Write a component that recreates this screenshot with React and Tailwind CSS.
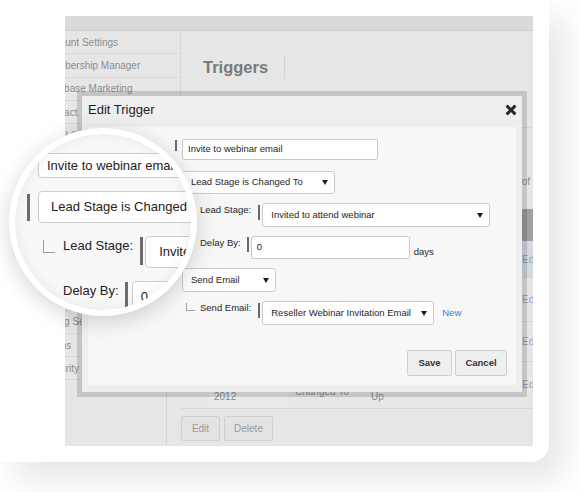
import React from "react";

const sideItems = [
  "Account Settings",
  "Membership Manager",
  "Database Marketing",
  "Contact",
  "Email Settings",
  "Lead Scoring",
  "Lead Stages",
  "Triggers",
  "Templates",
  "Domains",
  "Users",
  "API Access",
  "Billing Settings",
  "Forms",
  "Security",
];

function Arrow() {
  return (
    <svg width="6" height="5" viewBox="0 0 6 5" className="shrink-0">
      <path d="M0 0h6L3 5z" fill="#1f1f1f" />
    </svg>
  );
}

function Select({ className, children }) {
  return (
    <div
      className={`flex items-center justify-between bg-white border border-[#cbcbcb] rounded-[3px] pl-[8px] pr-[6px] whitespace-nowrap overflow-hidden ${className}`}
    >
      <span>{children}</span>
      <Arrow />
    </div>
  );
}

function Sidebar() {
  return (
    <div className="w-[102px] shrink-0 border-r border-[#d5d5d5]">
      {/* menu is wider than its column */}
      <div className="relative z-10 w-[116px] bg-[#e6e6e6] border-r border-[#d5d5d5] overflow-hidden">
        {sideItems.map((item) => (
          <div
            key={item}
            className="-ml-[22px] h-[23.3px] flex items-center border-b border-[#d8d8d8] text-[10px] text-[#8c8c8c] whitespace-nowrap"
          >
            {item}
          </div>
        ))}
      </div>
    </div>
  );
}

function Main() {
  return (
    <div className="flex-1 min-w-0 overflow-hidden pl-[14px]">
      {/* page header */}
      <div className="h-[97px] border-b border-[#d7d7d7]">
        <div className="h-[72px] flex items-center pl-[22px]">
          <span className="text-[16.5px] font-bold text-[#7a7a7a]">Triggers</span>
          <span className="ml-[16px] w-px h-[24px] bg-[#d2d2d2]" />
        </div>
      </div>
      {/* pager */}
      <div className="h-[81px] pl-[318px] pt-[46px] text-[10px] text-[#8c8c8c] whitespace-nowrap">
        1 - 4 of 4
      </div>
      {/* table */}
      <div className="w-[400px] text-[10px] text-[#8c8c8c]">
        <div className="h-[32px] bg-[#a0a0a0]" />
        <div className="h-[37px] bg-[#d5dae2] flex items-center border-b border-[#d6d6d6]">
          <span className="ml-[341px] text-[#87a3d2]">Edit</span>
        </div>
        <div className="h-[44px] flex items-center border-b border-[#d6d6d6]">
          <span className="ml-[341px] text-[#87a3d2]">Edit</span>
        </div>
        <div className="h-[40px] flex items-center border-b border-[#d6d6d6]">
          <span className="ml-[341px] text-[#87a3d2]">Edit</span>
        </div>
        <div className="h-[47px] flex border-b border-[#d6d6d6] leading-[12px]">
          <div className="w-[27px]" />
          <div className="w-[80px] bg-[#ebebeb] pl-[6px] pt-[17px]">
            <div>Oct 15,</div>
            <div>2012</div>
          </div>
          <div className="w-[77px] pl-[7px] pt-[12px]">
            <div>Lead Stage is</div>
            <div>Changed To</div>
          </div>
          <div className="w-[75px] pl-[6px] pt-[17px] whitespace-nowrap">
            <div>Webinar Follow</div>
            <div>Up</div>
          </div>
          <div className="w-[82px]" />
          <div className="pt-[17px] text-[#87a3d2]">Edit</div>
        </div>
      </div>
      {/* actions */}
      <div className="flex gap-[4px] mt-[7px]">
        <div className="w-[39px] h-[25px] flex items-center justify-center bg-[#e3e3e3] border border-[#cfcfcf] rounded-[2px] text-[10px] text-[#9a9a9a]">
          Edit
        </div>
        <div className="w-[49px] h-[25px] flex items-center justify-center bg-[#e3e3e3] border border-[#cfcfcf] rounded-[2px] text-[10px] text-[#9a9a9a]">
          Delete
        </div>
      </div>
    </div>
  );
}

function Modal() {
  return (
    <div className="absolute z-20 left-[12px] top-[75px] w-[450px] h-[306px] border-[5px] border-[rgba(0,0,0,0.14)] bg-clip-padding bg-[#eeeeee] flex flex-col">
      {/* title */}
      <div className="h-[31px] shrink-0 flex items-center justify-between pl-[6px] pr-[5px] pb-[4px]">
        <span className="text-[13px] text-[#1c1c1c]">Edit Trigger</span>
        <svg width="12" height="12" viewBox="0 0 12 12">
          <path d="M1.6 1.6l8.8 8.8M10.4 1.6l-8.8 8.8" stroke="#262626" strokeWidth="3" />
        </svg>
      </div>
      {/* body */}
      <div className="mx-[6px] h-[258px] bg-[#f7f7f7] pl-[87px] pt-[12px] text-[9.5px] text-[#262626]">
        <div className="h-[32px] flex items-start">
          <span className="mt-[1px] w-[2px] h-[11px] bg-[#6a6a6a]" />
          <div className="ml-[5px] w-[196px] h-[21px] flex items-center bg-white border border-[#cbcbcb] rounded-[2px] pl-[5px]">
            Invite to webinar email
          </div>
        </div>
        <div className="h-[32px] flex items-start">
          <span className="mt-[1px] w-[2px] h-[11px] bg-[#6a6a6a]" />
          <Select className="ml-[5px] w-[153px] h-[23px]">Lead Stage is Changed To</Select>
        </div>
        <div className="h-[33px] flex items-start pl-[11px]">
          <span className="mt-[2px] w-[9px] h-[8px] border-l border-b border-[#a0a0a0]" />
          <span className="ml-[5px]">Lead Stage:</span>
          <span className="ml-[7px] mt-[2px] w-[2px] h-[15px] bg-[#6a6a6a]" />
          <Select className="ml-[2px] w-[228px] h-[24px]">Invited to attend webinar</Select>
        </div>
        <div className="h-[32px] flex items-start pl-[25px]">
          <span>Delay By:</span>
          <span className="ml-[6px] mt-[1px] w-[2px] h-[15px] bg-[#6a6a6a]" />
          <div className="ml-[2px] w-[159px] h-[23px] flex items-center bg-white border border-[#cbcbcb] rounded-[2px] pl-[5px]">
            0
          </div>
          <span className="ml-[4px] self-center">days</span>
        </div>
        <div className="h-[33px] flex items-start pl-[7px]">
          <Select className="w-[94px] h-[24px]">Send Email</Select>
        </div>
        <div className="h-[24px] flex items-start pl-[11px]">
          <span className="mt-[2px] w-[9px] h-[8px] border-l border-b border-[#a0a0a0]" />
          <span className="ml-[5px]">Send Email:</span>
          <span className="ml-[7px] mt-[2px] w-[2px] h-[15px] bg-[#6a6a6a]" />
          <Select className="ml-[2px] w-[172px] h-[24px]">Reseller Webinar Invitation Email</Select>
          <span className="ml-[8px] self-center text-[#3f7ad4]">New</span>
        </div>
        <div className="mt-[25px] flex justify-end pr-[9px] gap-[3px]">
          <div className="w-[45px] h-[26px] flex items-center justify-center bg-[#efefef] border border-[#cfcfcf] rounded-[2px] font-bold text-[#333]">
            Save
          </div>
          <div className="w-[52px] h-[26px] flex items-center justify-center bg-[#efefef] border border-[#cfcfcf] rounded-[2px] font-bold text-[#333]">
            Cancel
          </div>
        </div>
      </div>
    </div>
  );
}

function Magnifier() {
  return (
    <div className="absolute z-30 left-[9px] top-[128px] w-[188px] h-[188px] rounded-full border-[6px] border-white bg-[#f8f8f8] overflow-hidden shadow-[0_5px_22px_rgba(0,0,0,0.17)]">
      <div className="pt-[19px] text-[13px] text-[#222] whitespace-nowrap">
        <div className="ml-[23px] w-[260px] h-[25px] flex items-center bg-white border border-[#cdcdcd] rounded-[4px] pl-[8px]">
          Invite to webinar email
        </div>
        <div className="mt-[13px] ml-[12px] flex items-start">
          <span className="mt-[3px] w-[3px] h-[27px] shrink-0 bg-[#6d6d6d]" />
          <div className="ml-[8px] w-[260px] h-[32px] shrink-0 flex items-center bg-white border border-[#cdcdcd] rounded-[4px] pl-[12px]">
            Lead Stage is Changed To
          </div>
        </div>
        <div className="mt-[13px] ml-[28px] flex items-start">
          <span className="mt-[4px] w-[12px] h-[13px] shrink-0 border-l border-b border-[#9a9a9a]" />
          <span className="ml-[8px] shrink-0">Lead Stage:</span>
          <span className="ml-[7px] mt-[1px] w-[3px] h-[28px] shrink-0 bg-[#6d6d6d]" />
          <div className="ml-[2px] w-[200px] h-[32px] shrink-0 flex items-center bg-white border border-[#cdcdcd] rounded-[4px] pl-[13px]">
            Invite
          </div>
        </div>
        <div className="mt-[13px] ml-[48px] flex items-start">
          <span className="shrink-0">Delay By:</span>
          <span className="ml-[6px] mt-[1px] w-[3px] h-[28px] shrink-0 bg-[#6d6d6d]" />
          <div className="ml-[4px] w-[200px] h-[32px] shrink-0 flex items-center bg-white border border-[#cdcdcd] rounded-[4px] pl-[8px]">
            0
          </div>
        </div>
      </div>
      <div className="pointer-events-none absolute inset-0 rounded-full shadow-[inset_0_0_14px_rgba(0,0,0,0.07)]" />
    </div>
  );
}

export default function App() {
  return (
    <div className="relative w-[579px] h-[492px] overflow-hidden bg-white font-['Liberation_Sans',Arial,sans-serif]">
      <div className="w-[549px] h-[462px] rounded-br-[18px] bg-white shadow-[16px_18px_34px_rgba(0,0,0,0.10)] pt-[16px] pl-[65px]">
        <div className="relative isolate w-[468px] h-[430px] overflow-hidden bg-[#e6e6e6]">
          <div className="h-[15px] bg-[#dadada] border-b border-[#d0d0d0]" />
          <div className="flex h-[415px]">
            <Sidebar />
            <Main />
          </div>
          <Modal />
        </div>
      </div>
      <Magnifier />
    </div>
  );
}
